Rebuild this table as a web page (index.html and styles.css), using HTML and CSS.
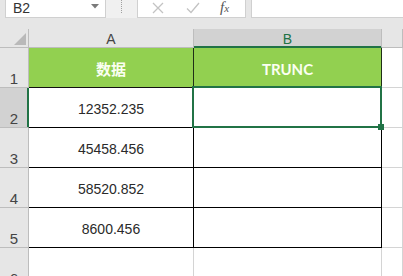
FILE: index.html
```html
<!DOCTYPE html>
<html>
<head>
<meta charset="utf-8">
<link rel="stylesheet" href="styles.css">
</head>
<body>
<div class="top">
  <div class="bar">
    <div class="namebox">
      <span class="ref">B2</span>
      <svg class="caret" width="8" height="5" viewBox="0 0 8 5"><path d="M0 0H8L4 4.5Z" fill="#7a7a7a"/></svg>
    </div>
    <div class="grip"><span class="dots"></span></div>
    <div class="fbtns">
      <svg class="ico" width="14" height="12" viewBox="0 0 14 12"><path d="M2 1L12 11M12 1L2 11" stroke="#c3c3c3" stroke-width="1.3" fill="none"/></svg>
      <svg class="ico" width="14" height="12" viewBox="0 0 14 12"><path d="M1 6.5L5 10.5L13 1" stroke="#c3c3c3" stroke-width="1.3" fill="none"/></svg>
      <span class="fx">f<span class="x">x</span></span>
    </div>
    <div class="finput"></div>
  </div>
</div>
<div class="sheet">
  <div class="cell corner"><svg width="12" height="12" viewBox="0 0 12 12"><path d="M12 0V12H0Z" fill="#b9b9b9"/></svg></div>
  <div class="cell ch">A</div>
  <div class="cell ch sel">B</div>
  <div class="cell ch"></div>

  <div class="cell rh">1</div>
  <div class="cell head">数据</div>
  <div class="cell head">TRUNC</div>
  <div class="cell"></div>

  <div class="cell rh rsel">2</div>
  <div class="cell data">12352.235</div>
  <div class="cell data active"><span class="handle"></span></div>
  <div class="cell"></div>

  <div class="cell rh">3</div>
  <div class="cell data">45458.456</div>
  <div class="cell data"></div>
  <div class="cell"></div>

  <div class="cell rh">4</div>
  <div class="cell data">58520.852</div>
  <div class="cell data"></div>
  <div class="cell"></div>

  <div class="cell rh">5</div>
  <div class="cell data">8600.456</div>
  <div class="cell data"></div>
  <div class="cell"></div>

  <div class="cell rh">6</div>
  <div class="cell"></div>
  <div class="cell"></div>
  <div class="cell"></div>
</div>
</body>
</html>
```
FILE: styles.css
```css
* { box-sizing: border-box; }
body {
  margin: 0;
  width: 403px;
  height: 276px;
  overflow: hidden;
  background: #fff;
  font-family: "Liberation Sans", Arial, sans-serif;
}
.top {
  background: #e6e6e6;
  padding-bottom: 11px;
}
.bar {
  display: flex;
  height: 18px;
  padding-left: 5px;
}
.namebox {
  width: 101px;
  background: #fff;
  border: 1px solid #d0d0d0;
  border-top: none;
  display: flex;
  align-items: center;
  justify-content: space-between;
  padding: 0 6px 1px 7px;
}
.ref {
  font-size: 14px;
  color: #333;
  line-height: 14px;
}
.caret { margin-top: -4px; }
.grip {
  width: 31px;
  display: flex;
  justify-content: center;
  background: #f0f0f0;
}
.dots {
  width: 1px;
  height: 13px;
  border-left: 1px dotted #a0a0a0;
}
.fbtns {
  width: 109px;
  background: #fff;
  border: 1px solid #d0d0d0;
  border-top: none;
  display: flex;
  align-items: center;
  padding: 0 0 2px 13px;
}
.ico { margin-right: 21px; }
.fx {
  font-family: "Liberation Serif", serif;
  font-style: italic;
  font-size: 15px;
  color: #555;
  line-height: 12px;
  margin-left: -1px;
}
.fx .x { font-size: 11px; }
.finput {
  flex: 1;
  margin-left: 5px;
  background: #fff;
  border-bottom: 1px solid #d0d0d0;
  border-left: 1px solid #d0d0d0;
}
.sheet {
  display: grid;
  grid-template-columns: 29px 165px 188px 1fr;
  grid-template-rows: 19px repeat(6, 40px);
}
.cell {
  border-right: 1px solid #d4d4d4;
  border-bottom: 1px solid #d4d4d4;
  display: flex;
  align-items: center;
  justify-content: center;
  font-size: 14px;
  color: #2a2a2a;
  position: relative;
}
.corner {
  background: #e6e6e6;
  border-right-color: #bdbdbd;
  border-bottom-color: #bdbdbd;
  align-items: flex-end;
  justify-content: flex-end;
  padding: 0 2px 2px 0;
}
.ch {
  background: #e6e6e6;
  border-right-color: #bdbdbd;
  border-bottom-color: #bdbdbd;
  color: #444;
  align-items: flex-end;
  line-height: 14px;
  padding-bottom: 1px;
}
.ch.sel {
  background: #d2d2d2;
  color: #217346;
  border-bottom-color: #217346;
  box-shadow: inset 0 -1px 0 #217346;
}
.rh {
  background: #e6e6e6;
  border-right-color: #bdbdbd;
  border-bottom-color: #bdbdbd;
  color: #444;
  font-size: 15px;
  align-items: flex-end;
  line-height: 14px;
  padding-bottom: 1px;
}
.rh.rsel {
  background: #d2d2d2;
  border-right-color: #217346;
  box-shadow: inset -1px 0 0 #217346;
}
.head {
  background: #92d050;
  color: #fbfff2;
  font-weight: bold;
  font-size: 15px;
  font-family: "Lato", "Noto Sans CJK SC", sans-serif;
  padding-top: 2px;
  border-right-color: #1f2f17;
  border-bottom-color: #111;
}
.data {
  border-right-color: #000;
  border-bottom-color: #000;
  padding-top: 2px;
}
.active::after {
  content: "";
  position: absolute;
  top: -2px;
  left: -2px;
  right: -1px;
  bottom: -1px;
  border: 2px solid #217346;
}
.handle {
  position: absolute;
  right: -3px;
  bottom: -3px;
  width: 6px;
  height: 6px;
  background: #217346;
  z-index: 2;
}
```
